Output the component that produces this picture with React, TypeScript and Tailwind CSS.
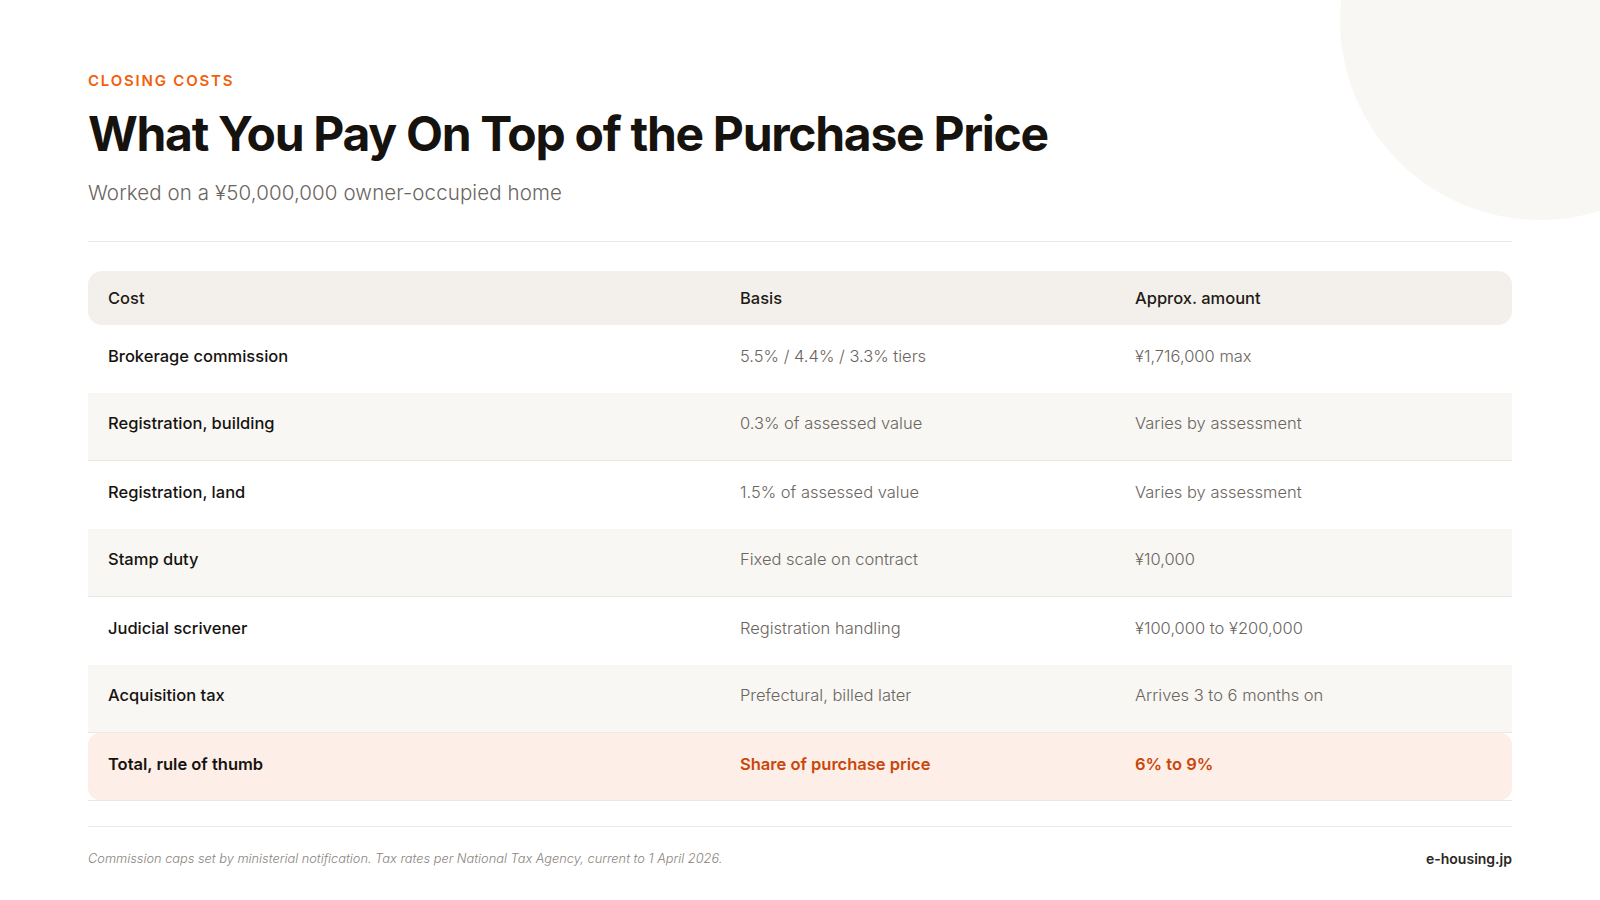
const rows = [
  { cost: "Brokerage commission", basis: "5.5% / 4.4% / 3.3% tiers", amount: "¥1,716,000 max" },
  { cost: "Registration, building", basis: "0.3% of assessed value", amount: "Varies by assessment" },
  { cost: "Registration, land", basis: "1.5% of assessed value", amount: "Varies by assessment" },
  { cost: "Stamp duty", basis: "Fixed scale on contract", amount: "¥10,000" },
  { cost: "Judicial scrivener", basis: "Registration handling", amount: "¥100,000 to ¥200,000" },
  { cost: "Acquisition tax", basis: "Prefectural, billed later", amount: "Arrives 3 to 6 months on" },
];

export default function App() {
  return (
    <div
      className="relative h-[900px] w-[1600px] overflow-hidden bg-white"
      style={{ fontFamily: "Inter, 'Noto Sans', sans-serif" }}
    >
      {/* decorative corner circle */}
      <div className="absolute left-[1340px] top-[-180px] h-[400px] w-[400px] rounded-full bg-[#f8f7f4]" />

      <div className="relative flex flex-col px-[88px] pt-[71px]">
        <div className="text-[15px] font-semibold uppercase leading-[20px] tracking-[0.12em] text-[#f2600c]">
          Closing costs
        </div>
        <h1 className="mt-[15px] text-[48px] font-bold leading-[56px] tracking-[-0.027em] text-[#16130f]">
          What You Pay On Top of the Purchase Price
        </h1>
        <p className="mt-[17px] text-[20.5px] font-light leading-[28px] tracking-[0.005em] text-[#6b6560]">
          Worked on a ¥50,000,000 owner-occupied home
        </p>

        <div className="mt-[34px] h-px bg-[#ebe7e1]" />

        <div className="mt-[29px] flex flex-col">
          <div className="grid h-[54px] grid-cols-[652px_395px_1fr] items-center rounded-[14px] bg-[#f3f0eb] text-[16.5px] font-medium text-[#1f1b17]">
            <div className="pl-[20px]">Cost</div>
            <div>Basis</div>
            <div>Approx. amount</div>
          </div>
          {rows.map((r, i) => (
            <div
              key={r.cost}
              className={
                i % 2 === 1
                  ? "grid h-[68px] grid-cols-[652px_395px_1fr] items-center border-b border-[#ebe7e1] bg-[#f8f7f4] pb-[6px] text-[16.5px]"
                  : "grid h-[68px] grid-cols-[652px_395px_1fr] items-center pb-[6px] text-[16.5px]"
              }
            >
              <div className="pl-[20px] font-medium text-[#16130f]">{r.cost}</div>
              <div className="font-light text-[#6b6560]">{r.basis}</div>
              <div className="font-light text-[#6b6560]">{r.amount}</div>
            </div>
          ))}
          <div className="border-b border-[#ebe7e1]">
            <div className="grid h-[67px] grid-cols-[652px_395px_1fr] items-center rounded-[12px] bg-[#fdeee8] pb-[5px] text-[16.5px] font-semibold">
              <div className="pl-[20px] text-[#16130f]">Total, rule of thumb</div>
              <div className="text-[#c9470a]">Share of purchase price</div>
              <div className="text-[#c9470a]">6% to 9%</div>
            </div>
          </div>
        </div>

        <div className="mt-[25px] h-px bg-[#ebe7e1]" />

        <div className="mt-[21px] flex items-center justify-between">
          <p className="text-[12.8px] font-light italic text-[#8a847e]">
            Commission caps set by ministerial notification. Tax rates per National Tax Agency, current to 1 April 2026.
          </p>
          <span className="text-[14px] font-semibold text-[#2b2622]">e-housing.jp</span>
        </div>
      </div>
    </div>
  );
}
